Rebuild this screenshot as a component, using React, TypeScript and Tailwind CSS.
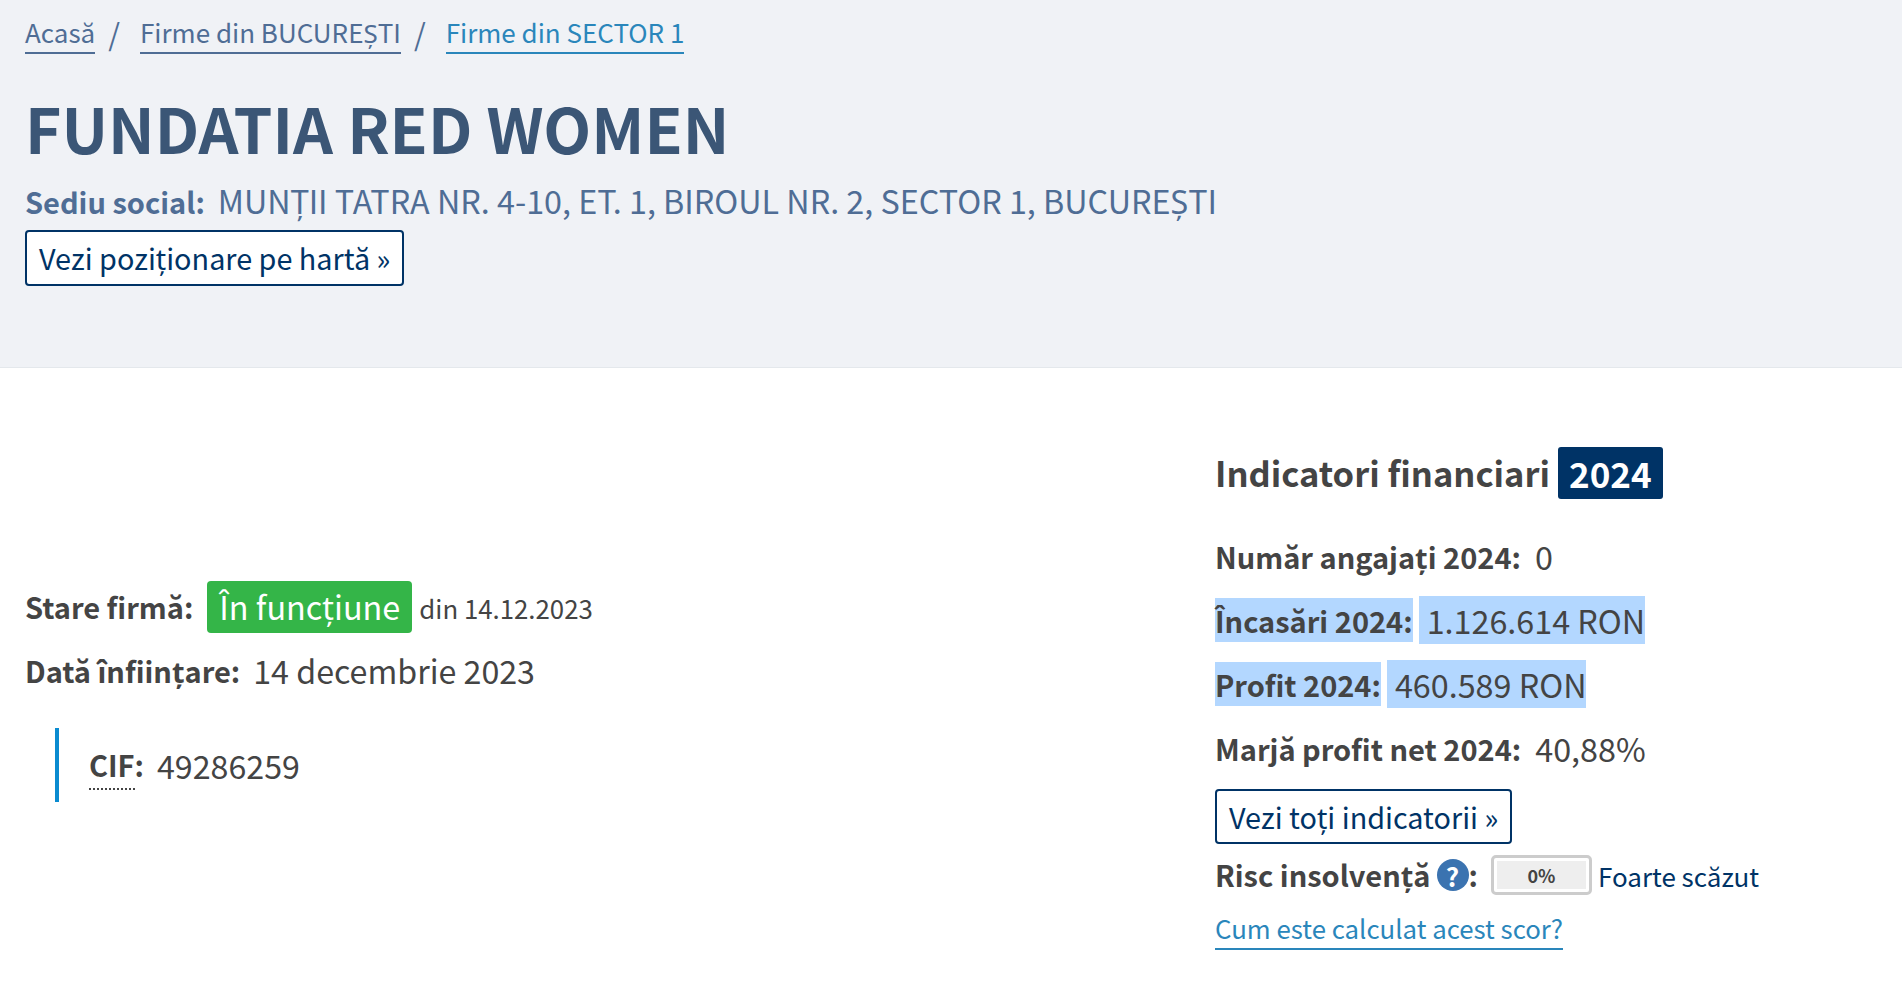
const font = { fontFamily: '"Noto Sans CJK SC", "Noto Sans", sans-serif' };

function Crumb({ label, last }: { label: string; last?: boolean }) {
  return (
    <a className={`border-b-2 leading-[40px] ${last ? "text-[#2a86bb] border-[#2a86bb]" : "text-[#4f6d95] border-[#4f6d95]"}`}>
      {label}
    </a>
  );
}

function Row({ label, value, mark }: { label: string; value: string; mark?: boolean }) {
  return (
    <div className="h-[64px] flex items-center text-[#444] text-[32.3px]">
      <span className={`font-bold text-[29px] leading-[44px] ${mark ? "bg-[#b3d7ff]" : ""}`}>{label}</span>
      <span className={`ml-[6px] pl-[8px] leading-[48px] ${mark ? "bg-[#b3d7ff]" : ""}`}>{value}</span>
    </div>
  );
}

export default function App() {
  return (
    <div className="h-[988px] bg-white overflow-hidden" style={font}>
      <header className="h-[368px] bg-[#f0f2f6] border-b border-[#e4e8ec] pl-[25px] pt-[12px]">
        <nav className="flex items-center text-[26px] h-[42px]">
          <Crumb label="Acasă" />
          <span className="ml-[13px] mr-[20px] text-[#4f6d95] text-[30px]">/</span>
          <Crumb label="Firme din BUCUREȘTI" />
          <span className="ml-[13px] mr-[20px] text-[#4f6d95] text-[30px]">/</span>
          <Crumb label="Firme din SECTOR 1" last />
        </nav>
        <h1 className="mt-[35px] text-[62.3px] leading-[76px] font-bold text-[#3b5676]">FUNDATIA RED WOMEN</h1>
        <div className="mt-[10px] text-[32.3px] leading-[50px] text-[#4f6d95]">
          <span className="font-bold text-[29px]">Sediu social:</span>
          <span className="ml-[13px]">MUNȚII TATRA NR. 4-10, ET. 1, BIROUL NR. 2, SECTOR 1, BUCUREȘTI</span>
        </div>
        <a className="mt-[4px] inline-flex items-center h-[56px] px-[12px] bg-white border-2 border-[#003366] rounded-[4px] text-[#003366] text-[28.8px]">
          Vezi poziționare pe hartă »
        </a>
      </header>

      <main className="flex pl-[25px]">
        <section className="w-[1190px] pt-[212px] text-[#444]">
          <div className="h-[53px] flex items-center">
            <span className="font-bold text-[29px]">Stare firmă:</span>
            <span className="ml-[14px] h-[52px] px-[12px] flex items-center rounded-[4px] bg-[#34b548] text-white text-[32.4px]">În funcțiune</span>
            <span className="ml-[7px] mt-[3px] text-[25.8px]">din 14.12.2023</span>
          </div>
          <div className="mt-[11px] h-[53px] flex items-center text-[32.2px]">
            <span className="font-bold text-[29px]">Dată înființare:</span>
            <span className="ml-[13px]">14 decembrie 2023</span>
          </div>
          <div className="mt-[31px] ml-[30px] h-[74px] border-l-4 border-[#0a8bd0] pl-[30px] flex items-center text-[32.2px]">
            <span className="font-bold text-[29px]">
              <span className="inline-block leading-[47px] border-b-2 border-dotted border-[#444]">CIF</span>:
            </span>
            <span className="ml-[13px]">49286259</span>
          </div>
        </section>

        <aside className="pt-[79px]">
          <div className="flex items-center">
            <h2 className="text-[34.5px] font-bold text-[#444]">Indicatori financiari</h2>
            <span className="ml-[8px] h-[52px] px-[11px] flex items-center rounded-[3px] bg-[#003366] text-white text-[35px] font-bold">2024</span>
          </div>
          <div className="mt-[25px]">
            <Row label="Număr angajați 2024:" value="0" />
            <Row label="Încasări 2024:" value="1.126.614 RON" mark />
            <Row label="Profit 2024:" value="460.589 RON" mark />
            <Row label="Marjă profit net 2024:" value="40,88%" />
          </div>
          <a className="mt-[9px] inline-flex items-center h-[55px] px-[12px] bg-white border-2 border-[#003366] rounded-[4px] text-[#003366] text-[28.8px]">
            Vezi toți indicatorii »
          </a>
          <div className="mt-[10px] h-[42px] flex items-center">
            <span className="font-bold text-[29px] text-[#444]">Risc insolvență</span>
            <span className="ml-[6px] size-[32px] rounded-full bg-[#3b73b0] text-white font-bold text-[26px] flex items-center justify-center">?</span>
            <span className="font-bold text-[29px] text-[#444]">:</span>
            <span className="ml-[13px] w-[101px] h-[40px] border-[3px] border-[#ccc] rounded-[5px] p-[3px] bg-white">
              <span className="h-full flex items-center justify-center bg-[#eeeeee] text-[#444] font-bold text-[18px]">0%</span>
            </span>
            <span className="ml-[6px] text-[#003366] text-[26px]">Foarte scăzut</span>
          </div>
          <a className="mt-[12px] inline-block border-b-2 border-[#2a86bb] text-[#2a86bb] text-[25.8px] leading-[40px]">
            Cum este calculat acest scor?
          </a>
        </aside>
      </main>
    </div>
  );
}
